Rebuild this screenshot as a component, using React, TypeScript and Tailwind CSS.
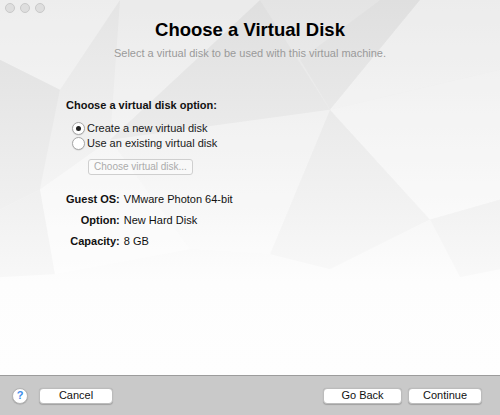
import React from "react";

const font = { fontFamily: '"Liberation Sans", Arial, sans-serif' };

function Facets() {
  return (
    <svg className="absolute inset-0 w-full h-full" viewBox="0 0 500 376" preserveAspectRatio="none">
      <defs>
        <linearGradient id="fade" x1="0" y1="0" x2="0" y2="1">
          <stop offset="0" stopColor="#e4e4e4" />
          <stop offset="0.55" stopColor="#f6f6f6" />
          <stop offset="0.75" stopColor="#fdfdfd" />
          <stop offset="1" stopColor="#fefefe" />
        </linearGradient>
      </defs>
      <rect x="0" y="0" width="500" height="376" fill="url(#fade)" />
      <polygon points="0,0 120,0 60,90 0,60" fill="#ffffff" opacity="0.35" />
      <polygon points="120,0 260,0 110,140" fill="#ffffff" opacity="0.25" />
      <polygon points="0,60 60,90 40,190 0,210" fill="#000000" opacity="0.025" />
      <polygon points="110,140 260,0 330,110" fill="#000000" opacity="0.02" />
      <polygon points="330,110 420,0 500,0 500,70" fill="#ffffff" opacity="0.3" />
      <polygon points="380,0 420,0 330,110 300,60" fill="#000000" opacity="0.02" />
      <polygon points="500,70 330,110 430,220 500,200" fill="#ffffff" opacity="0.35" />
      <polygon points="40,190 110,140 190,250 55,275" fill="#ffffff" opacity="0.4" />
      <polygon points="110,140 330,110 270,255 190,250" fill="#ffffff" opacity="0.2" />
      <polygon points="330,110 430,220 330,270 270,255" fill="#000000" opacity="0.015" />
      <polygon points="0,210 40,190 55,275 0,278" fill="#000000" opacity="0.02" />
      <polygon points="430,220 500,200 500,270 460,278" fill="#000000" opacity="0.015" />
    </svg>
  );
}

function Radio({ checked, label }: { checked?: boolean; label: string }) {
  return (
    <div className="flex items-center h-[15px]">
      <span className="w-[13px] h-[13px] rounded-full border border-[#a8a8a8] bg-white flex items-center justify-center shadow-[0_0.5px_1px_rgba(0,0,0,0.15)]">
        {checked && <span className="w-[5px] h-[5px] rounded-full bg-[#222]" />}
      </span>
      <span className="ml-[2px] text-[11px] leading-none text-[#1a1a1a]">{label}</span>
    </div>
  );
}

function Btn({ label, w }: { label: string; w: string }) {
  return (
    <button
      className={`${w} h-4 rounded-[4px] bg-white border border-[#bcbcbc] shadow-[0_0.5px_1px_rgba(0,0,0,0.2)] text-[11px] text-[#111] leading-none flex items-center justify-center`}
    >
      {label}
    </button>
  );
}

export default function App() {
  return (
    <div className="w-[500px] h-[415px] flex flex-col overflow-hidden bg-white" style={font}>
      <div className="relative flex-1 flex flex-col">
        <Facets />
        <div className="relative flex-1 flex flex-col">
          <div className="flex gap-[5px] pl-[5px] pt-[3px]">
            <span className="w-[10px] h-[10px] rounded-full border border-[#c9c9c9] bg-[#dedede]" />
            <span className="w-[10px] h-[10px] rounded-full border border-[#c9c9c9] bg-[#dedede]" />
            <span className="w-[10px] h-[10px] rounded-full border border-[#c9c9c9] bg-[#dedede]" />
          </div>
          <h1 className="text-center font-bold text-[18.5px] leading-none text-black mt-[8px]">Choose a Virtual Disk</h1>
          <p className="text-center text-[11px] leading-none text-[#9a9a9a] mt-[8px]">
            Select a virtual disk to be used with this virtual machine.
          </p>

          <div className="pl-[66px] mt-[41px]">
            <div className="font-bold text-[11px] leading-none text-[#111]">Choose a virtual disk option:</div>
            <div className="pl-[6px] mt-[10px] flex flex-col">
              <Radio checked label="Create a new virtual disk" />
              <Radio label="Use an existing virtual disk" />
            </div>
            <div className="pl-[22px] mt-[8px]">
              <div className="w-[105px] h-4 rounded-[3px] border border-[#cfcfcf] bg-white/40 text-[10px] text-[#ababab] leading-none flex items-center justify-center">
                Choose virtual disk...
              </div>
            </div>

            <div className="mt-[17px] grid grid-cols-[auto_auto] justify-start gap-x-[4px] gap-y-[7px] text-[11px] leading-[14px] text-[#111]">
              <span className="font-bold text-right whitespace-nowrap">Guest OS:</span>
              <span>VMware Photon 64-bit</span>
              <span className="font-bold text-right whitespace-nowrap">Option:</span>
              <span>New Hard Disk</span>
              <span className="font-bold text-right whitespace-nowrap">Capacity:</span>
              <span>8 GB</span>
            </div>
          </div>
        </div>
      </div>

      <div className="h-[40px] border-t border-[#9c9c9c] bg-[#c9c9c9] flex items-center pl-[12px] pr-[18px]">
        <span className="w-[16px] h-[16px] rounded-full bg-white border border-[#b4b4b4] shadow-[0_0.5px_1px_rgba(0,0,0,0.2)] flex items-center justify-center text-[11px] font-bold text-[#3b8beb] leading-none">
          ?
        </span>
        <div className="ml-[11px]">
          <Btn label="Cancel" w="w-[74px]" />
        </div>
        <div className="flex-1" />
        <div className="flex gap-[6px]">
          <Btn label="Go Back" w="w-[79px]" />
          <Btn label="Continue" w="w-[74px]" />
        </div>
      </div>
    </div>
  );
}
